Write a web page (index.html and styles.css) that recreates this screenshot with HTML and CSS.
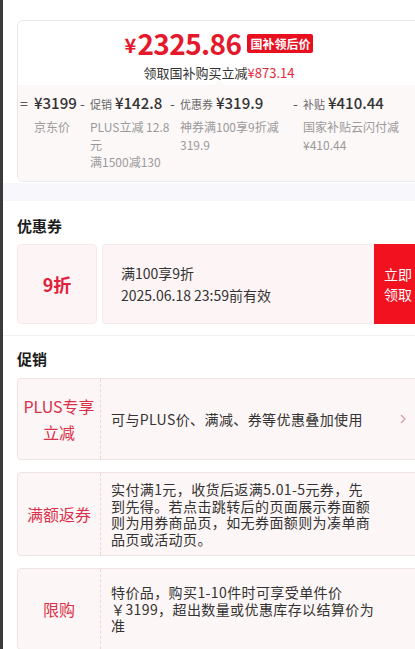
FILE: index.html
```html
<!DOCTYPE html>
<html lang="zh-CN">
<head>
<meta charset="UTF-8" />
<title>优惠明细</title>
<meta name="viewport" content="width=device-width, initial-scale=1.0" />
<link rel="stylesheet" href="styles.css">
</head>
<body>
<div class="page">

    <div class="price-card">
        <div class="price-top">
            <div class="price-line">
                <span class="yen">¥</span><span class="amount">2325.86</span>
                <span class="badge">国补领后价</span>
            </div>
            <div class="price-sub">领取国补购买立减<em>¥873.14</em></div>
        </div>
        <div class="calc">
            <div class="calc-col col1">
                <div class="calc-head"><span class="op">=</span><span class="num">¥3199</span></div>
                <div class="calc-desc">京东价</div>
            </div>
            <div class="calc-col col2">
                <div class="calc-head"><span class="op">-</span><span class="lbl">促销</span><span class="num">¥142.8</span></div>
                <div class="calc-desc">PLUS立减 12.8 元<br>满1500减130</div>
            </div>
            <div class="calc-col col3">
                <div class="calc-head"><span class="op">-</span><span class="lbl">优惠券</span><span class="num">¥319.9</span></div>
                <div class="calc-desc">神券满100享9折减319.9</div>
            </div>
            <div class="calc-col col4">
                <div class="calc-head"><span class="op">-</span><span class="lbl">补贴</span><span class="num">¥410.44</span></div>
                <div class="calc-desc">国家补贴云闪付减¥410.44</div>
            </div>
        </div>
    </div>

    <div class="band"></div>

    <div class="section coupons">
        <h3 class="section-title">优惠券</h3>
        <div class="coupon">
            <div class="coupon-value">9折</div>
            <div class="coupon-body">
                <div>满100享9折</div>
                <div>2025.06.18 23:59前有效</div>
            </div>
            <div class="coupon-btn">立即<br>领取</div>
        </div>
    </div>

    <div class="section promos">
        <h3 class="section-title">促销</h3>
        <div class="promo">
            <div class="promo-tag">PLUS专享<br>立减</div>
            <div class="promo-text">可与PLUS价、满减、券等优惠叠加使用</div>
            <svg class="promo-arrow" width="6" height="10" viewBox="0 0 6 10"><path d="M1 1l4 4-4 4" fill="none" stroke="#dba2ab" stroke-width="1.4"/></svg>
        </div>
        <div class="promo">
            <div class="promo-tag">满额返券</div>
            <div class="promo-text">实付满1元，收货后返满5.01-5元券，先到先得。若点击跳转后的页面展示券面额则为用券商品页，如无券面额则为凑单商品页或活动页。</div>
        </div>
        <div class="promo">
            <div class="promo-tag">限购</div>
            <div class="promo-text">特价品，购买1-10件时可享受单件价￥3199，超出数量或优惠库存以结算价为准</div>
        </div>
    </div>

</div>
</body>
</html>
```

FILE: styles.css
```css
html, body {
    margin: 0;
    overflow: hidden;
}
body {
    background: #fff;
    border-left: 3px solid #3b3b3b;
    font-family: "Noto Sans CJK SC", "Noto Sans", sans-serif;
    color: #333;
    font-size: 14px;
}
.page {
    width: 418px;
    padding-top: 20px;
}

/* price card */
.price-card {
    margin-left: 14px;
    border: 1px solid #e9e9ec;
    border-radius: 6px;
    overflow: hidden;
}
.price-top {
    height: 64px;
    box-sizing: border-box;
    padding-top: 2px;
    display: flex;
    flex-direction: column;
    align-items: center;
    position: relative;
}
.price-top::after {
    content: "";
    position: absolute;
    left: 50%;
    bottom: 0;
    margin-left: -5px;
    border: 5px solid transparent;
    border-bottom-color: #fdf8f8;
}
.price-line {
    display: flex;
    align-items: center;
    color: #e5192b;
    font-weight: 700;
    height: 40px;
}
.yen {
    font-size: 20px;
    line-height: 30px;
    margin-top: 4px;
    margin-right: 1px;
}
.amount {
    font-size: 28px;
    line-height: 40px;
    letter-spacing: -0.6px;
}
.badge {
    margin-left: 6px;
    background: #e8101f;
    color: #fff;
    font-size: 12px;
    line-height: 19px;
    padding: 0 3px;
    border-radius: 2px;
}
.price-sub {
    font-size: 13px;
    line-height: 19px;
    color: #333;
}
.price-sub em {
    font-style: normal;
    color: #e4293a;
}

.calc {
    background: #fdf8f8;
    height: 96px;
    display: flex;
    padding: 7px 0 0 2px;
    box-sizing: border-box;
}
.calc-head {
    display: flex;
    align-items: baseline;
    white-space: nowrap;
}
.op {
    font-size: 14px;
    color: #555;
    width: 14px;
}
.lbl {
    font-size: 11px;
    color: #666;
    margin-right: 3px;
}
.num {
    font-size: 15px;
    font-weight: 500;
    color: #333;
}
.calc-desc {
    font-size: 12px;
    line-height: 17.5px;
    color: #9a9a9a;
    margin: 5px 0 0 14px;
}
.col1 { width: 60px; }
.col2 { width: 90px; }
.col2 .calc-desc { width: 82px; }
.col3 { width: 123px; }
.col3 .calc-desc { width: 108px; }
.col4 { width: 110px; }
.col4 .calc-desc { width: 100px; }
.col2 .op, .col3 .op, .col4 .op { width: 10px; }
.col2 .calc-desc, .col3 .calc-desc, .col4 .calc-desc { margin-left: 10px; }

.band {
    height: 18px;
    margin-top: 1px;
    background: #f8f8fc;
}

/* sections */
.section {
    padding-left: 14px;
}
.coupons {
    border-bottom: 1px solid #f1f1f3;
}
.section-title {
    margin: 0;
    font-size: 15px;
    font-weight: 700;
    color: #1c1c1c;
    line-height: 20px;
}
.coupons .section-title { padding: 15px 0 8px; }
.promos .section-title { padding: 13px 0 9px; }

.coupon {
    display: flex;
    height: 80px;
    margin-bottom: 11px;
}
.coupon-value {
    width: 80px;
    flex: none;
    display: flex;
    align-items: center;
    justify-content: center;
    background: #fdf5f5;
    border: 1px solid #f6ebeb;
    border-radius: 4px;
    box-sizing: border-box;
    color: #e1213a;
    font-size: 18px;
    font-weight: 700;
}
.coupon-body {
    flex: 1;
    margin-left: 5px;
    background: #fdf5f5;
    border: 1px solid #f6ebeb;
    border-right: none;
    border-radius: 4px 0 0 4px;
    padding: 0 0 0 18px;
    display: flex;
    flex-direction: column;
    justify-content: center;
    font-size: 14px;
    line-height: 22px;
    color: #333;
}
.coupon-btn {
    width: 47px;
    box-sizing: border-box;
    flex: none;
    background: #f2121f;
    color: #fff;
    font-size: 14px;
    line-height: 20px;
    padding-left: 10px;
    display: flex;
    align-items: center;
}

.promo {
    display: flex;
    align-items: stretch;
    min-height: 82px;
    background: #fdf6f6;
    border: 1px solid #f1e3e4;
    border-radius: 4px;
    box-sizing: border-box;
    margin-bottom: 12px;
    position: relative;
}
.promo-tag {
    width: 82px;
    flex: none;
    border-right: 1px dashed #efd5d8;
    display: flex;
    align-items: center;
    justify-content: center;
    text-align: center;
    color: #db3049;
    font-size: 16px;
    line-height: 26px;
}
.promo-text {
    width: 264px;
    padding: 8px 0 8px 10px;
    font-size: 14px;
    letter-spacing: 0.4px;
    line-height: 16.5px;
    color: #333;
    display: flex;
    align-items: center;
}
.promo-arrow {
    position: absolute;
    right: 14px;
    top: 50%;
    margin-top: -5px;
}
```
